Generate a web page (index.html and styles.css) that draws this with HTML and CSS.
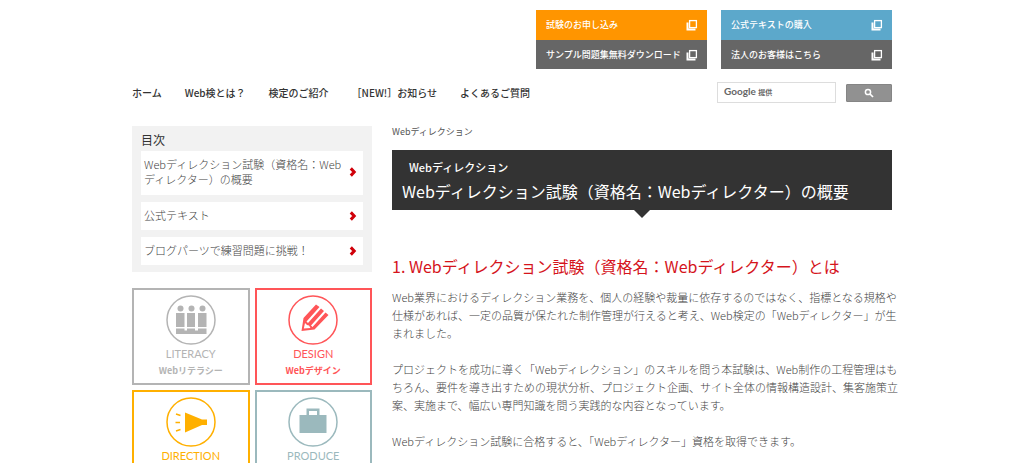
FILE: index.html
```html
<!DOCTYPE html>
<html lang="ja">
<head>
<meta charset="utf-8">
<meta name="viewport" content="width=device-width, initial-scale=1">
<title>Webディレクション試験（資格名：Webディレクター）の概要</title>
<link rel="stylesheet" href="styles.css">
</head>
<body>
<svg class="sprite" aria-hidden="true">
  <symbol id="window" viewBox="0 0 12 12">
    <path d="M1.500 3.500V10.500h7V9.500" fill="none" stroke="#fff" stroke-width="2"/>
    <rect x="3.600" y="1.600" width="6.800" height="7" fill="none" stroke="#fff" stroke-width="1.300"/>
  </symbol>
  <symbol id="chevron" viewBox="0 0 8 10">
    <path d="M1.800 1.400 5.200 5 1.800 8.600" fill="none" stroke="#d0000a" stroke-width="3"/>
  </symbol>
</svg>
<div class="page">
  <header class="header">
    <div class="actions">
      <div class="action-group">
        <a class="action orange" href="#">試験のお申し込み<svg class="window-icon"><use href="#window"/></svg></a>
        <a class="action" href="#">サンプル問題集無料ダウンロード<svg class="window-icon"><use href="#window"/></svg></a>
      </div>
      <div class="action-group">
        <a class="action blue" href="#">公式テキストの購入<svg class="window-icon"><use href="#window"/></svg></a>
        <a class="action" href="#">法人のお客様はこちら<svg class="window-icon"><use href="#window"/></svg></a>
      </div>
    </div>
    <div class="bar">
      <nav class="nav">
        <a href="#">ホーム</a>
        <a href="#">Web検とは？</a>
        <a href="#">検定のご紹介</a>
        <a href="#">［NEW!］お知らせ</a>
        <a href="#">よくあるご質問</a>
      </nav>
      <form class="search">
        <label class="field">
          <span class="brand">Google <small>提供</small></span>
          <input type="text" aria-label="検索">
        </label>
        <button type="button" aria-label="検索する">
          <svg viewBox="0 0 10 10"><circle cx="4" cy="4" r="2.600" fill="none" stroke="#fff" stroke-width="1.500"/><path d="m6 6 3 3" stroke="#fff" stroke-width="1.700"/></svg>
        </button>
      </form>
    </div>
  </header>
  <div class="columns">
    <aside class="sidebar">
      <nav class="toc">
        <h2>目次</h2>
        <a href="#about"><span>Webディレクション試験（資格名：Webディレクター）の概要</span><svg><use href="#chevron"/></svg></a>
        <a href="#text"><span>公式テキスト</span><svg><use href="#chevron"/></svg></a>
        <a href="#blog"><span>ブログパーツで練習問題に挑戦！</span><svg><use href="#chevron"/></svg></a>
      </nav>
      <div class="cards">
        <a class="card literacy" href="#">
          <svg viewBox="0 0 50 50"><circle class="ring" cx="25" cy="25" r="24"/>
            <circle cx="14.500" cy="13.500" r="3"/><circle cx="25.500" cy="13.500" r="3"/><circle cx="36.500" cy="13.500" r="3"/>
            <path d="M10 18h8.500v14H10zM21 18h8v14h-8zM32 18h8.500v14H32zM10 33.500h8.500v2H21v-2h8v2h3v-2h8.500V39H10z"/></svg>
          <span class="en">LITERACY</span><b>Webリテラシー</b>
        </a>
        <a class="card design" href="#">
          <svg viewBox="0 0 50 50"><circle class="ring" cx="25" cy="25" r="24"/>
            <path fill-rule="evenodd" d="M28 9.500 31.500 12 18.500 26.500l1.500 1.500L33 13.500l3 2.500L23 30.500l1.500 1.500L37.500 17.500 40.500 20 26.500 34.500 13.500 36l2-13zM17 28l-1.200 5.500L22.500 33l-1.500-2.500-2-.500z"/></svg>
          <span class="en">DESIGN</span><b>Webデザイン</b>
        </a>
        <a class="card direction" href="#">
          <svg viewBox="0 0 50 50"><circle class="ring" cx="25" cy="25" r="24"/>
            <path d="M19 15.500 36 22.500h5v5.500h-5l-17 7.500z"/><path class="rays" d="m10 17 4.500 1.500M9.500 25.500H14M10 34l4.500-1.500"/></svg>
          <span class="en">DIRECTION</span><b>Webディレクション</b>
        </a>
        <a class="card produce" href="#">
          <svg viewBox="0 0 50 50"><circle class="ring" cx="25" cy="25" r="24"/>
            <path fill-rule="evenodd" d="M11.500 18h7v-6.500h13V18h7v18h-27zM21 18h8v-4h-8z"/></svg>
          <span class="en">PRODUCE</span><b>Webプロデュース</b>
        </a>
      </div>
    </aside>
    <main class="content">
      <p class="crumb">Webディレクション</p>
      <div class="title">
        <p>Webディレクション</p>
        <h1>Webディレクション試験（資格名：Webディレクター）の概要</h1>
      </div>
      <section id="about" class="article">
        <h2>1. Webディレクション試験（資格名：Webディレクター）とは</h2>
        <p>Web業界におけるディレクション業務を、個人の経験や裁量に依存するのではなく、指標となる規格や<br>仕様があれば、一定の品質が保たれた制作管理が行えると考え、Web検定の「Webディレクター」が生<br>まれました。</p>
        <p>プロジェクトを成功に導く「Webディレクション」のスキルを問う本試験は、Web制作の工程管理はも<br>ちろん、要件を導き出すための現状分析、プロジェクト企画、サイト全体の情報構造設計、集客施策立<br>案、実施まで、幅広い専門知識を問う実践的な内容となっています。</p>
        <p>Webディレクション試験に合格すると、「Webディレクター」資格を取得できます。</p>
      </section>
    </main>
  </div>
</div>
</body>
</html>
```
FILE: styles.css
```css
* { box-sizing: border-box; }
body {
  margin: 0;
  background: #fff;
  color: #333;
  font-family: "Noto Sans CJK JP", sans-serif;
  font-size: 11px;
  line-height: 18px;
}
a { color: inherit; text-decoration: none; }
h1, h2, p { margin: 0; }
.sprite { display: none; }
.page { max-width: 760px; margin: 0 auto; padding-top: 10px; }

.actions { display: flex; justify-content: flex-end; gap: 14px; }
.action-group { width: 171px; }
.action {
  display: flex;
  align-items: center;
  justify-content: space-between;
  height: 29px;
  padding: 0 9px 0 10px;
  background: #666;
  color: #fff;
  font-size: 9px;
  font-weight: 500;
  white-space: nowrap;
}
.action.orange { background: #ff9500; height: 30px; }
.action.blue { background: #5ca8cb; height: 30px; }
.window-icon { width: 12px; height: 12px; }

.bar {
  display: flex;
  justify-content: space-between;
  align-items: center;
  margin-top: 13px;
}
.nav { display: flex; gap: 23px; font-size: 10px; font-weight: 500; white-space: nowrap; }
.search { display: flex; align-items: center; gap: 10px; }
.field { display: grid; width: 119px; height: 21px; }
.field > * { grid-area: 1 / 1; }
.field input {
  width: 100%;
  border: 1px solid #ddd;
  background: transparent;
  padding: 0 6px;
}
.brand {
  padding-left: 7px;
  color: #666;
  font-family: Lato, "Noto Sans CJK JP", sans-serif;
  font-size: 10px;
  font-weight: 700;
}
.brand small { font-size: 7px; }
.search button {
  display: flex;
  align-items: center;
  justify-content: center;
  width: 46px;
  height: 18px;
  padding: 0;
  border: 1px solid #858585;
  border-radius: 1px;
  background: #919191;
}
.search button svg { width: 10px; height: 10px; }

.columns {
  display: grid;
  grid-template-columns: 240px minmax(0, 1fr);
  gap: 20px;
  margin-top: 23px;
}
.toc {
  display: flex;
  flex-direction: column;
  gap: 7px;
  padding: 5px 9px 7px;
  background: #f2f2f2;
}
.toc h2 { margin-bottom: -5px; font-size: 12px; font-weight: 400; }
.toc a {
  display: flex;
  align-items: center;
  justify-content: space-between;
  padding: 6px 6px 7px 3px;
  background: #fff;
  color: #444;
  font-weight: 300;
  line-height: 15px;
}
.toc a:nth-of-type(1) { padding-bottom: 8px; }
.toc a span { max-width: 202px; }
.toc svg { flex: none; width: 8px; height: 10px; }

.cards {
  display: grid;
  grid-template-columns: 1fr 1fr;
  gap: 5px;
  margin-top: 16px;
}
.card {
  display: flex;
  flex-direction: column;
  align-items: center;
  height: 97px;
  padding-top: 5px;
  border: 2px solid currentColor;
  line-height: 17px;
}
.card svg { width: 50px; height: 50px; fill: currentColor; }
.card .ring { fill: none; stroke: currentColor; stroke-width: 1.5px; }
.card .rays { fill: none; stroke: currentColor; stroke-width: 1.5px; }
.card .en { font-family: Lato, sans-serif; font-size: 11px; }
.card b { font-size: 9px; }
.literacy { color: #b4b4b4; }
.design { color: #ff5558; }
.direction { color: #ffb000; }
.produce { color: #9bb9bd; }

.crumb { color: #555; font-size: 9px; line-height: 12px; }
.title {
  position: relative;
  margin-top: 12px;
  padding: 8px 10px;
  background: #333;
  color: #fff;
}
.title::after {
  content: "";
  position: absolute;
  top: 100%;
  left: 50%;
  margin-left: -8px;
  border: solid transparent;
  border-width: 8px 8px 0;
  border-top-color: #333;
}
.title p { padding-left: 7px; font-weight: 500; }
.title h1 { padding-top: 4px; font-size: 16px; font-weight: 400; line-height: 22px; }
.article { color: #444; white-space: nowrap; }
.article h2 {
  margin: 46px 0 12px;
  color: #d5141c;
  font-size: 16px;
  font-weight: 400;
  line-height: 20px;
}
.article p { margin-bottom: 18px; font-weight: 300; }
```
